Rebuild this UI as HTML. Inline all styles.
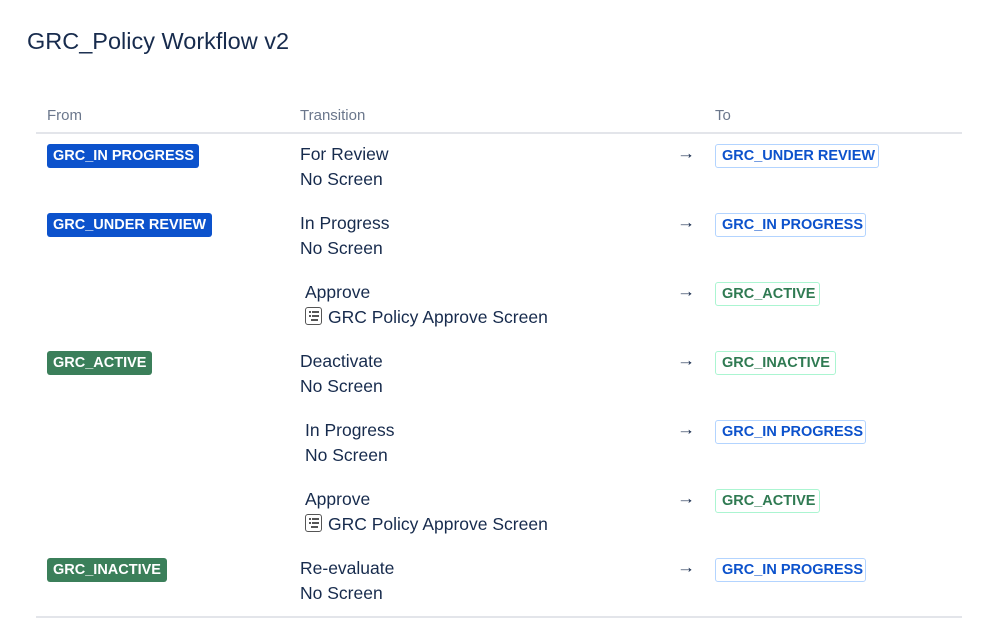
<!DOCTYPE html>
<html><head><style>
body{margin:0;width:999px;height:636px;background:#fff;font-family:"Liberation Sans",sans-serif;color:#172b4d;position:relative;overflow:hidden}
.a{position:absolute;white-space:nowrap}
h1{position:absolute;left:27px;top:28px;margin:0;font-weight:400;font-size:23.5px}
.hd{font-size:15px;color:#6b778c;top:107px}
.line{position:absolute;left:36px;width:926px;height:2px;background:#e3e5ea}
.loz{position:absolute;height:24px;display:flex;align-items:center;border-radius:3px;font-weight:700;font-size:14.5px;padding:0 6px;box-sizing:border-box;white-space:nowrap}
.sb{background:#0c52cc;color:#fff;left:47px}
.sg{background:#3b7f5a;color:#fff;left:47px}
.ob{border:1.5px solid #b3d4ff;color:#0c52cc;left:715px}
.og{border:1.5px solid #abf5d1;color:#2f7a52;left:715px}
.t{font-size:17.5px;line-height:25px}
.ar{font-size:18px;left:677px;font-weight:700;transform:scaleY(0.9)}
.ic{display:inline-block;width:17px;height:18px;border:1.4px solid #555;border-radius:3px;box-sizing:border-box;vertical-align:-2px;margin-right:6px;position:relative}
.ic i{position:absolute;height:1.5px;background:#555}
</style></head><body>
<h1>GRC_Policy Workflow v2</h1>
<div class="a hd" style="left:47px">From</div>
<div class="a hd" style="left:300px">Transition</div>
<div class="a hd" style="left:715px">To</div>
<div class="line" style="top:132px"></div>
<div class="line" style="top:616px"></div>

<div class="loz sb" style="top:144px;width:152px">GRC_IN PROGRESS</div>
<div class="a t" style="left:300px;top:142px">For Review<br>No Screen</div>
<div class="a ar" style="top:143px">→</div>
<div class="loz ob" style="top:144px;width:164px">GRC_UNDER REVIEW</div>

<div class="loz sb" style="top:213px;width:165px">GRC_UNDER REVIEW</div>
<div class="a t" style="left:300px;top:211px">In Progress<br>No Screen</div>
<div class="a ar" style="top:212px">→</div>
<div class="loz ob" style="top:213px;width:151px">GRC_IN PROGRESS</div>

<div class="a t" style="left:305px;top:280px">Approve<br><span class="ic"><i style="left:3px;top:3px;width:2px"></i><i style="left:6px;top:3px;width:7px"></i><i style="left:3px;top:7px;width:2px"></i><i style="left:6px;top:7px;width:7px"></i><i style="left:5px;top:11px;width:7px"></i></span>GRC Policy Approve Screen</div>
<div class="a ar" style="top:281px">→</div>
<div class="loz og" style="top:282px;width:105px">GRC_ACTIVE</div>

<div class="loz sg" style="top:351px;width:105px">GRC_ACTIVE</div>
<div class="a t" style="left:300px;top:349px">Deactivate<br>No Screen</div>
<div class="a ar" style="top:350px">→</div>
<div class="loz og" style="top:351px;width:121px">GRC_INACTIVE</div>

<div class="a t" style="left:305px;top:418px">In Progress<br>No Screen</div>
<div class="a ar" style="top:419px">→</div>
<div class="loz ob" style="top:420px;width:151px">GRC_IN PROGRESS</div>

<div class="a t" style="left:305px;top:487px">Approve<br><span class="ic"><i style="left:3px;top:3px;width:2px"></i><i style="left:6px;top:3px;width:7px"></i><i style="left:3px;top:7px;width:2px"></i><i style="left:6px;top:7px;width:7px"></i><i style="left:5px;top:11px;width:7px"></i></span>GRC Policy Approve Screen</div>
<div class="a ar" style="top:488px">→</div>
<div class="loz og" style="top:489px;width:105px">GRC_ACTIVE</div>

<div class="loz sg" style="top:558px;width:120px">GRC_INACTIVE</div>
<div class="a t" style="left:300px;top:556px">Re-evaluate<br>No Screen</div>
<div class="a ar" style="top:557px">→</div>
<div class="loz ob" style="top:558px;width:151px">GRC_IN PROGRESS</div>
</body></html>
